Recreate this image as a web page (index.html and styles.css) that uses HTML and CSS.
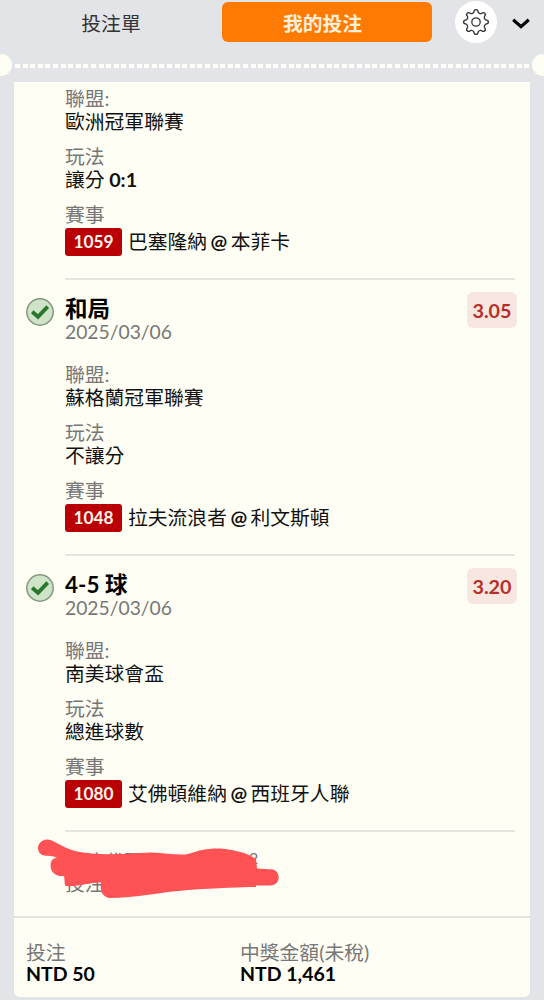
FILE: index.html
```html
<!DOCTYPE html>
<html lang="zh-Hant">
<head>
<meta charset="utf-8">
<title>我的投注</title>
<link rel="stylesheet" href="styles.css">
</head>
<body>
<header class="tabs">
  <div class="tab">投注單</div>
  <div class="tab tab-active">我的投注</div>
  <div class="gear">
    <svg width="28" height="28" viewBox="-14 -14 28 28" fill="none" stroke="#333" stroke-width="1.3" stroke-linejoin="round"><circle r="4.2"/><path d="M-2.2 -9.6Q-2 -12.4 0 -12.4Q2 -12.4 2.2 -9.6Q3.6 -7.9 5.3 -8.4Q7.5 -10.2 8.8 -8.8Q10.2 -7.5 8.4 -5.3Q7.9 -3.6 9.6 -2.2Q12.4 -2 12.4 0Q12.4 2 9.6 2.2Q7.9 3.6 8.4 5.3Q10.2 7.5 8.8 8.8Q7.5 10.2 5.3 8.4Q3.6 7.9 2.2 9.6Q2 12.4 0 12.4Q-2 12.4 -2.2 9.6Q-3.6 7.9 -5.3 8.4Q-7.5 10.2 -8.8 8.8Q-10.2 7.5 -8.4 5.3Q-7.9 3.6 -9.6 2.2Q-12.4 2 -12.4 0Q-12.4 -2 -9.6 -2.2Q-7.9 -3.6 -8.4 -5.3Q-10.2 -7.5 -8.8 -8.8Q-7.5 -10.2 -5.3 -8.4Q-3.6 -7.9 -2.2 -9.6Z"/></svg>
  </div>
  <svg class="chevron" width="18" height="12" viewBox="0 0 18 12" fill="none" stroke="#000" stroke-width="3.2"><path d="M1.2 1.8L9 8.6L16.8 1.8"/></svg>
</header>
<div class="perforation">
  <span class="notch"></span><span class="dots"></span><span class="notch"></span>
</div>
<main class="card">
  <section class="leg leg-first">
    <div class="leg-body">
      <div class="field"><div class="label">聯盟:</div><div class="value">歐洲冠軍聯賽</div></div>
      <div class="field"><div class="label">玩法</div><div class="value">讓分 <b>0:1</b></div></div>
      <div class="field"><div class="label">賽事</div><div class="match"><span class="code">1059</span><span class="teams">巴塞隆納 <b>@</b> 本菲卡</span></div></div>
    </div>
  </section>
  <section class="leg">
    <svg class="check" width="28" height="28" viewBox="0 0 28 28"><circle cx="14" cy="14" r="13.2" fill="#cfe3c8" stroke="#84977f" stroke-width="1.5"/><path d="M6.2 13.8L12 18.8L21.7 8.6" fill="none" stroke="#28772b" stroke-width="3.8"/></svg>
    <div class="leg-body">
      <div class="leg-head">
        <div><div class="title">和局</div><div class="date">2025/03/06</div></div>
        <div class="odds">3.05</div>
      </div>
      <div class="field"><div class="label">聯盟:</div><div class="value">蘇格蘭冠軍聯賽</div></div>
      <div class="field"><div class="label">玩法</div><div class="value">不讓分</div></div>
      <div class="field"><div class="label">賽事</div><div class="match"><span class="code">1048</span><span class="teams">拉夫流浪者 <b>@</b> 利文斯頓</span></div></div>
    </div>
  </section>
  <section class="leg">
    <svg class="check" width="28" height="28" viewBox="0 0 28 28"><circle cx="14" cy="14" r="13.2" fill="#cfe3c8" stroke="#84977f" stroke-width="1.5"/><path d="M6.2 13.8L12 18.8L21.7 8.6" fill="none" stroke="#28772b" stroke-width="3.8"/></svg>
    <div class="leg-body">
      <div class="leg-head">
        <div><div class="title">4-5 球</div><div class="date">2025/03/06</div></div>
        <div class="odds">3.20</div>
      </div>
      <div class="field"><div class="label">聯盟:</div><div class="value">南美球會盃</div></div>
      <div class="field"><div class="label">玩法</div><div class="value">總進球數</div></div>
      <div class="field"><div class="label">賽事</div><div class="match"><span class="code">1080</span><span class="teams">艾佛頓維納 <b>@</b> 西班牙人聯</span></div></div>
    </div>
  </section>
  <section class="reference">
    <div>投注代碼</div>
    <div>投注</div>
    <span class="tail tail-top">2</span>
    <span class="tail tail-bottom">22</span>
    <svg class="scribble" width="244" height="64" viewBox="36 836 244 64"><path fill="#ff5255" d="M46 839.500C53 839 59 846 75 851C96 856 121 854 151 852.500C164 853 175 855 186 854.500C200 850 208 848 221 848.500C238 850 251 855 256 859L257 868.500L273 869.500C281 872 281 885 270 885.500L256 885.500V887C242 887 217 888 188 890C161 892 136 898 109 898C101 896 100 889 101 882.500C91 882 78 887 66 886C64 885 65 880 64 876C54 877 49 870 51 862C52 859 54 858 57 858C51 854 44 858 39.500 853C36 847 39 841 46 839.500Z"/></svg>
  </section>
  <footer class="totals">
    <div><div class="label">投注</div><div class="amount">NTD 50</div></div>
    <div><div class="label">中獎金額(未稅)</div><div class="amount">NTD 1,461</div></div>
  </footer>
</main>
</body>
</html>
```
FILE: styles.css
```css
* { box-sizing: border-box; }
body {
  margin: 0;
  height: 1000px;
  overflow: hidden;
  background: #e3e4e7;
  color: #111;
  font: 400 19.8px/23px Lato, "Noto Sans CJK TC", sans-serif;
}
b { font-weight: 700; }
.tabs {
  display: flex;
  align-items: center;
  height: 44px;
}
.tabs > * { flex: none; }
.tab {
  width: 222px;
  height: 40px;
  line-height: 42px;
  text-align: center;
  color: #333538;
}
.tab-active {
  width: 210px;
  padding-right: 9px;
  border-radius: 6px;
  background: #ff7a00;
  color: #fff0dc;
  font-weight: 700;
}
.gear {
  display: grid;
  place-items: center;
  width: 42px;
  height: 42px;
  margin-left: 23px;
  border-radius: 50%;
  background: #fff;
}
.chevron { margin: 3px 0 0 15px; }
.perforation {
  display: flex;
  align-items: center;
  justify-content: space-between;
  height: 23px;
  margin: 9px -10px 6px;
}
.notch {
  width: 22px;
  height: 22px;
  border-radius: 50%;
  background: #fffef5;
}
.dots {
  flex: 1;
  height: 4px;
  margin: 3px 0 0 3px;
  background: repeating-linear-gradient(90deg, #fffef8 0 5px, transparent 5px 7.6px);
}
.card {
  width: 516px;
  height: 915px;
  margin-left: 14px;
  border-radius: 0 0 6px 6px;
  background: #fffef5;
}
.leg {
  display: flex;
  padding: 16px 15px 0 12px;
}
.leg-first { padding: 5px 15px 0 51px; }
.check { flex: none; margin: 2px 11px 0 0; }
.leg-body {
  flex: 1;
  padding-bottom: 22px;
  border-bottom: 2px solid #e6e4de;
}
.leg-head {
  display: flex;
  justify-content: space-between;
  height: 47px;
  margin-bottom: 20px;
}
.title {
  color: #000;
  font-size: 22.5px;
  font-weight: 700;
  line-height: 26px;
}
.date {
  color: #777;
  font-size: 19.3px;
  line-height: 20px;
}
.odds {
  width: 50px;
  height: 36px;
  margin: -4px -2px 0 0;
  border-radius: 6px;
  background: #f8e6e0;
  color: #b72f29;
  font-weight: 700;
  line-height: 36px;
  text-align: center;
}
.field + .field { margin-top: 12px; }
.label { color: #777; }
.value { word-spacing: -0.5px; }
.match {
  display: flex;
  align-items: center;
  gap: 6px;
  height: 28px;
  margin-top: 2px;
}
.teams {
  margin-top: -2px;
  word-spacing: -1.6px;
}
.code {
  width: 57px;
  height: 28px;
  border-radius: 3px;
  background: #b90005;
  color: #fff4e8;
  font-size: 17.3px;
  font-weight: 700;
  line-height: 27px;
  text-align: center;
}
.reference {
  position: relative;
  height: 84px;
  padding: 18px 0 0 51px;
  color: #777;
  line-height: 22px;
}
.tail {
  position: absolute;
  font-size: 16px;
  line-height: 16px;
}
.tail-top { top: 18px; left: 235px; }
.tail-bottom { top: 41px; left: 221px; }
.scribble {
  position: absolute;
  top: 4px;
  left: 22px;
}
.totals {
  display: grid;
  grid-template-columns: 214px 1fr;
  padding: 23px 0 0 12px;
  border-top: 2px solid #e6e4e1;
}
.amount {
  color: #000;
  font-size: 19.5px;
  font-weight: 700;
  line-height: 20px;
}
```
